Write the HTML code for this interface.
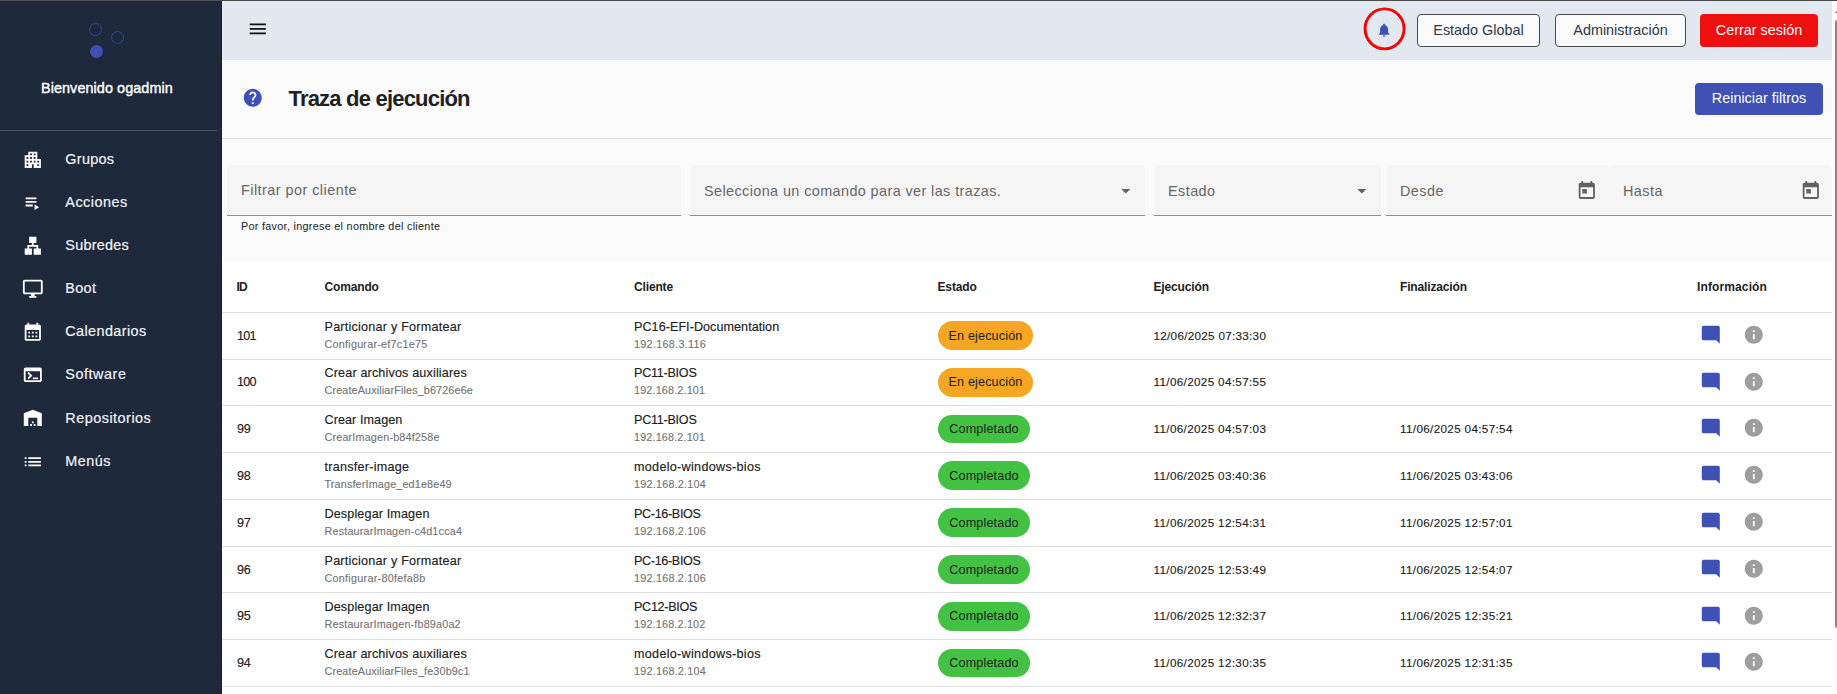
<!DOCTYPE html>
<html lang="es">
<head>
<meta charset="utf-8">
<title>Traza de ejecución</title>
<style>
*{box-sizing:border-box;margin:0;padding:0}
html,body{width:1837px;height:694px;overflow:hidden;background:#fafafa;font-family:"Liberation Sans",sans-serif;color:#212121}
body{position:relative}
.abs{position:absolute}
/* top window strip */
#strip{left:0;top:0;width:1837px;height:1px;background:linear-gradient(to right,#57544f 0,#57544f 222px,#4b4846 222px,#4b4846 100%);z-index:50}
/* sidebar */
#side{left:0;top:0;width:222px;height:694px;background:#1e293b;border-right:1px solid #172033}
#side .dot{position:absolute;border-radius:50%;width:13px;height:13px}
#welcome{left:41px;top:79px;color:#fff;font-size:14.4px;line-height:18px;white-space:nowrap;letter-spacing:.08px;-webkit-text-stroke:.4px #fff}
#sdiv{left:0;top:130px;width:217px;height:1px;background:#4b5565}
.nav{position:absolute;left:0;width:222px;height:43px}
.nav svg{position:absolute;left:22px;top:11px;width:21.6px;height:21.6px;fill:#fff}
.nav span{position:absolute;left:65.3px;top:12px;font-size:14.4px;line-height:19px;color:#f1f3f6;white-space:nowrap;-webkit-text-stroke:.2px #f1f3f6}
/* header */
#head{left:222px;top:0;width:1610px;height:60px;background:#e2e8f0}
.btn{position:absolute;top:14px;height:33px;border-radius:4px;font-size:14.4px;line-height:31px;text-align:center;white-space:nowrap}
.btn.o{border:1px solid #4a4a4a;background:#fafafa;color:#2d3748}
/* title */
#title{left:288.5px;top:85.4px;font-size:22px;line-height:28px;font-weight:bold;color:#212121;white-space:nowrap;letter-spacing:-.8px}
#hr{left:222px;top:138px;width:1610px;height:1px;background:#dcdcdc}
/* filters */
.fld{position:absolute;top:165px;height:51px;background:#f5f5f5;border-radius:4px 4px 0 0;border-bottom:1px solid #8c8c8c}
.fld span{position:absolute;left:14px;top:17px;font-size:14.4px;line-height:19px;color:#666;white-space:nowrap}
.fld svg{position:absolute;fill:#616161}
#hint{left:241px;top:219px;font-size:10.8px;line-height:14px;color:#222;white-space:nowrap;letter-spacing:.3px}
/* table */
#tbl{left:222px;top:262px;width:1610px;height:432px;background:#fff}
.th{position:absolute;top:279px;font-size:12px;line-height:16px;font-weight:bold;color:#212121;white-space:nowrap;letter-spacing:-.15px}
.row{position:absolute;left:222px;width:1610px;height:47px}
.ln{position:absolute;left:222px;width:1610px;height:1px;background:#e0e0e0}
.row div,.row span{position:absolute;white-space:nowrap}
.id{left:15px;top:16px;font-size:12.6px;line-height:16px;letter-spacing:-.3px;-webkit-text-stroke:.15px #212121}
.p{font-size:12.6px;line-height:16px;top:7px;color:#212121;-webkit-text-stroke:.15px #212121}
.s{font-size:10.8px;line-height:14px;top:25px;color:#737373;-webkit-text-stroke:.12px #737373}
.c1{left:102.5px}.c2{left:412px}
.chip{left:716px;top:9px;height:28.8px;border-radius:15px;font-size:12.6px;line-height:30.6px;text-align:center;color:#212121;letter-spacing:.15px}
.run{width:95px;background:#f5a623}
.ok{width:92px;background:#42c143}
.chip.ct{background:none}
.d{font-size:11.7px;line-height:14px;top:17px;color:#212121;-webkit-text-stroke:.12px #212121}
.d1{left:931.5px}.d2{left:1178px}
.row svg{position:absolute;width:21.6px;height:21.6px;top:12.2px}
.cm{left:1477.6px;fill:#3f51b5}
.in{left:1520.5px;fill:#9e9e9e}
/* scrollbar */
#sb{left:1832px;top:1px;width:5px;height:693px;background:#fcfcfc}
#thumb{left:1835px;top:19.5px;width:4px;height:608px;background:#8b8b8b;border-radius:3px}
#arr{left:1835px;top:9.5px;width:0;height:0;border-left:3px solid transparent;border-right:3px solid transparent;border-bottom:3px solid #555}
</style>
</head>
<body>
<div id="side" class="abs">
  <div class="dot" style="left:89px;top:23px;border:1px solid #35459a"></div>
  <div class="dot" style="left:111px;top:31px;border:1px solid #35459a"></div>
  <div class="dot" style="left:90px;top:45px;background:#3f51b5"></div>
  <div id="welcome" class="abs">Bienvenido ogadmin</div>
  <div id="sdiv" class="abs"></div>
  <div class="nav" style="top:137.5px"><svg viewBox="0 0 24 24"><path d="M17 11V3H7v4H3v14h8v-4h2v4h8V11h-4zM7 19H5v-2h2v2zm0-4H5v-2h2v2zm0-4H5V9h2v2zm4 4H9v-2h2v2zm0-4H9V9h2v2zm0-4H9V5h2v2zm4 8h-2v-2h2v2zm0-4h-2V9h2v2zm0-4h-2V5h2v2zm4 12h-2v-2h2v2zm0-4h-2v-2h2v2z"/></svg><span style="letter-spacing:0.3px">Grupos</span></div>
  <div class="nav" style="top:180.7px"><svg viewBox="0 0 24 24"><path d="M4 10h12v2H4zm0-4h12v2H4zm0 8h8v2H4zm10 0v6l5-3z"/></svg><span style="letter-spacing:0.5px">Acciones</span></div>
  <div class="nav" style="top:223.9px"><svg viewBox="0 0 24 24"><path d="M13 22h8v-7h-3v-4h-5V9h3V2H8v7h3v2H6v4H3v7h8v-7H8v-2h8v2h-3z"/></svg><span style="letter-spacing:0.25px">Subredes</span></div>
  <div class="nav" style="top:267.1px"><svg viewBox="0 0 24 24"><path d="M21 2H3c-1.1 0-2 .9-2 2v12c0 1.1.9 2 2 2h7v2H8v2h8v-2h-2v-2h7c1.1 0 2-.9 2-2V4c0-1.1-.9-2-2-2zm0 14H3V4h18v12z"/></svg><span style="letter-spacing:0.35px">Boot</span></div>
  <div class="nav" style="top:310.3px"><svg viewBox="0 0 24 24"><path d="M19 4h-1V2h-2v2H8V2H6v2H5c-1.11 0-1.99.9-1.99 2L3 20c0 1.1.89 2 2 2h14c1.1 0 2-.9 2-2V6c0-1.1-.9-2-2-2zm0 16H5V10h14v10zM9 14H7v-2h2v2zm4 0h-2v-2h2v2zm4 0h-2v-2h2v2zm-8 4H7v-2h2v2zm4 0h-2v-2h2v2zm4 0h-2v-2h2v2z"/></svg><span style="letter-spacing:0.4px">Calendarios</span></div>
  <div class="nav" style="top:352.7px"><svg viewBox="0 0 24 24"><path d="M20 4H4c-1.11 0-2 .9-2 2v12c0 1.1.89 2 2 2h16c1.1 0 2-.9 2-2V6c0-1.1-.89-2-2-2zm0 14H4V8h16v10zm-2-1h-6v-2h6v2zM7.5 17l-1.41-1.41L8.67 13l-2.59-2.59L7.5 9l4 4-4 4z"/></svg><span style="letter-spacing:0.55px">Software</span></div>
  <div class="nav" style="top:396.7px"><svg style="top:10.5px" viewBox="0 0 24 24"><path d="M22 21V7L12 3 2 7v14h5v-9h10v9h5zm-11-2H9v2h2v-2zm2-3h-2v2h2v-2zm2 3h-2v2h2v-2z"/></svg><span style="letter-spacing:0.5px">Repositorios</span></div>
  <div class="nav" style="top:439.9px"><svg style="top:10.7px" viewBox="0 0 24 24"><path d="M3 13h2v-2H3v2zm0 4h2v-2H3v2zm0-8h2V7H3v2zm4 4h14v-2H7v2zm0 4h14v-2H7v2zM7 7v2h14V7H7z"/></svg><span style="letter-spacing:0.5px">Menús</span></div>
</div>

<div id="head" class="abs"></div>
<svg class="abs" style="left:247.2px;top:18.4px;width:21.6px;height:21.6px" viewBox="0 0 24 24"><path fill="#111" d="M3 18h18v-2H3v2zm0-5h18v-2H3v2zm0-7v2h18V6H3z"/></svg>
<svg class="abs" style="left:1360px;top:4px;width:50px;height:50px" viewBox="0 0 50 50"><ellipse cx="24.55" cy="24.85" rx="19.5" ry="20" fill="none" stroke="#f00" stroke-width="2.9"/></svg>
<svg class="abs" style="left:1376.3px;top:21.6px;width:16.2px;height:16.2px" viewBox="0 0 24 24"><path fill="#3f51b5" d="M12 22c1.1 0 2-.9 2-2h-4c0 1.1.89 2 2 2zm6-6v-5c0-3.07-1.64-5.64-4.5-6.32V4c0-.83-.67-1.5-1.5-1.5s-1.5.67-1.5 1.5v.68C7.63 5.36 6 7.92 6 11v5l-2 2v1h16v-1l-2-2z"/></svg>
<div class="btn o" id="b1" style="left:1417px;width:123px">Estado Global</div>
<div class="btn o" id="b2" style="left:1555px;width:131px">Administración</div>
<div class="btn" id="b3" style="left:1700px;width:118px;background:#ee0f0f;color:#fff;line-height:33px">Cerrar sesión</div>

<svg class="abs" style="left:241.8px;top:87.2px;width:21.6px;height:21.6px" viewBox="0 0 24 24"><path fill="#3f51b5" d="M12 2C6.48 2 2 6.48 2 12s4.48 10 10 10 10-4.48 10-10S17.52 2 12 2zm1 17h-2v-2h2v2zm2.07-7.75l-.9.92C13.45 12.9 13 13.5 13 15h-2v-.5c0-1.1.45-2.1 1.17-2.83l1.24-1.26c.37-.36.59-.86.59-1.41 0-1.1-.9-2-2-2s-2 .9-2 2H8c0-2.21 1.79-4 4-4s4 1.79 4 4c0 .88-.36 1.68-.93 2.25z"/></svg>
<div id="title" class="abs">Traza de ejecución</div>
<div class="btn" id="b4" style="left:1695px;top:83px;width:128px;height:32px;line-height:30.6px;background:#3f51b5;color:#fff">Reiniciar filtros</div>
<div id="hr" class="abs"></div>

<div class="fld" style="left:227px;width:454px"><span id="f1" style="top:16px;letter-spacing:.47px">Filtrar por cliente</span></div>
<div class="fld" style="left:690px;width:455px"><span id="f2" style="letter-spacing:.41px">Selecciona un comando para ver las trazas.</span><svg style="left:425.3px;top:15.3px;width:21.6px;height:21.6px" viewBox="0 0 24 24"><path d="M7 10l5 5 5-5z"/></svg></div>
<div class="fld" style="left:1154px;width:227px"><span id="f3" style="letter-spacing:.45px">Estado</span><svg style="left:197.2px;top:15.3px;width:21.6px;height:21.6px" viewBox="0 0 24 24"><path d="M7 10l5 5 5-5z"/></svg></div>
<div class="fld" style="left:1386px;width:223px"><span id="f4" style="letter-spacing:.45px">Desde</span><svg style="left:190px;top:15px;width:21.6px;height:21.6px" viewBox="0 0 24 24"><path d="M19 3h-1V1h-2v2H8V1H6v2H5c-1.11 0-1.99.9-1.99 2L3 19c0 1.1.89 2 2 2h14c1.1 0 2-.9 2-2V5c0-1.1-.9-2-2-2zm0 16H5V8h14v11zM7 10h5v5H7z"/></svg></div>
<div class="fld" style="left:1609px;width:223px"><span id="f5" style="letter-spacing:.45px">Hasta</span><svg style="left:191px;top:15px;width:21.6px;height:21.6px" viewBox="0 0 24 24"><path d="M19 3h-1V1h-2v2H8V1H6v2H5c-1.11 0-1.99.9-1.99 2L3 19c0 1.1.89 2 2 2h14c1.1 0 2-.9 2-2V5c0-1.1-.9-2-2-2zm0 16H5V8h14v11zM7 10h5v5H7z"/></svg></div>
<div id="hint" class="abs">Por favor, ingrese el nombre del cliente</div>

<div id="tbl" class="abs"></div>
<div class="th" style="left:236.5px;letter-spacing:-.8px">ID</div>
<div class="th" style="left:324.5px">Comando</div>
<div class="th" style="left:634px">Cliente</div>
<div class="th" style="left:937.5px">Estado</div>
<div class="th" style="left:1153.5px">Ejecución</div>
<div class="th" style="left:1400px">Finalización</div>
<div class="th" style="left:1697px;letter-spacing:.12px">Información</div>
<!--ROWS-->
<div class="row" style="top:312px"><div class="id" style="letter-spacing:-.75px">101</div><div class="p c1" style="letter-spacing:0.228px">Particionar y Formatear</div><div class="s c1" style="letter-spacing:0.237px">Configurar-ef7c1e75</div><div class="p c2" style="letter-spacing:0.047px">PC16-EFI-Documentation</div><div class="s c2" style="letter-spacing:0.296px">192.168.3.116</div><div class="chip run" style="top:9.0px"></div><div class="chip run ct">En ejecución</div><div class="d d1" style="letter-spacing:0.286px">12/06/2025 07:33:30</div><svg class="cm" style="top:12.2px" viewBox="0 0 24 24"><path d="M21.99 4c0-1.1-.89-2-1.99-2H4c-1.1 0-2 .9-2 2v12c0 1.1.9 2 2 2h14l4 4-.01-18z"/></svg><svg class="in" style="top:12.2px" viewBox="0 0 24 24"><path d="M12 2C6.48 2 2 6.48 2 12s4.48 10 10 10 10-4.48 10-10S17.52 2 12 2zm1 15h-2v-6h2v6zm0-8h-2V7h2v2z"/></svg></div>
<div class="row" style="top:358px"><div class="id" style="letter-spacing:-.75px">100</div><div class="p c1" style="letter-spacing:0.154px">Crear archivos auxiliares</div><div class="s c1" style="letter-spacing:0.135px">CreateAuxiliarFiles_b6726e6e</div><div class="p c2" style="letter-spacing:-0.257px">PC11-BIOS</div><div class="s c2" style="letter-spacing:0.163px">192.168.2.101</div><div class="chip run" style="top:9.8px"></div><div class="chip run ct">En ejecución</div><div class="d d1" style="letter-spacing:0.335px">11/06/2025 04:57:55</div><svg class="cm" style="top:13.2px" viewBox="0 0 24 24"><path d="M21.99 4c0-1.1-.89-2-1.99-2H4c-1.1 0-2 .9-2 2v12c0 1.1.9 2 2 2h14l4 4-.01-18z"/></svg><svg class="in" style="top:13.2px" viewBox="0 0 24 24"><path d="M12 2C6.48 2 2 6.48 2 12s4.48 10 10 10 10-4.48 10-10S17.52 2 12 2zm1 15h-2v-6h2v6zm0-8h-2V7h2v2z"/></svg></div>
<div class="row" style="top:405px"><div class="id">99</div><div class="p c1" style="letter-spacing:0.073px">Crear Imagen</div><div class="s c1" style="letter-spacing:0.172px">CrearImagen-b84f258e</div><div class="p c2" style="letter-spacing:-0.257px">PC11-BIOS</div><div class="s c2" style="letter-spacing:0.163px">192.168.2.101</div><div class="chip ok" style="top:9.6px"></div><div class="chip ok ct">Completado</div><div class="d d1" style="letter-spacing:0.335px">11/06/2025 04:57:03</div><div class="d d2" style="letter-spacing:0.335px">11/06/2025 04:57:54</div><svg class="cm" style="top:12.2px" viewBox="0 0 24 24"><path d="M21.99 4c0-1.1-.89-2-1.99-2H4c-1.1 0-2 .9-2 2v12c0 1.1.9 2 2 2h14l4 4-.01-18z"/></svg><svg class="in" style="top:12.2px" viewBox="0 0 24 24"><path d="M12 2C6.48 2 2 6.48 2 12s4.48 10 10 10 10-4.48 10-10S17.52 2 12 2zm1 15h-2v-6h2v6zm0-8h-2V7h2v2z"/></svg></div>
<div class="row" style="top:452px"><div class="id">98</div><div class="p c1" style="letter-spacing:0.261px">transfer-image</div><div class="s c1" style="letter-spacing:0.154px">TransferImage_ed1e8e49</div><div class="p c2" style="letter-spacing:0.300px">modelo-windows-bios</div><div class="s c2" style="letter-spacing:0.229px">192.168.2.104</div><div class="chip ok" style="top:9.4px"></div><div class="chip ok ct">Completado</div><div class="d d1" style="letter-spacing:0.335px">11/06/2025 03:40:36</div><div class="d d2" style="letter-spacing:0.335px">11/06/2025 03:43:06</div><svg class="cm" style="top:12.2px" viewBox="0 0 24 24"><path d="M21.99 4c0-1.1-.89-2-1.99-2H4c-1.1 0-2 .9-2 2v12c0 1.1.9 2 2 2h14l4 4-.01-18z"/></svg><svg class="in" style="top:12.2px" viewBox="0 0 24 24"><path d="M12 2C6.48 2 2 6.48 2 12s4.48 10 10 10 10-4.48 10-10S17.52 2 12 2zm1 15h-2v-6h2v6zm0-8h-2V7h2v2z"/></svg></div>
<div class="row" style="top:499px"><div class="id">97</div><div class="p c1" style="letter-spacing:0.132px">Desplegar Imagen</div><div class="s c1" style="letter-spacing:0.181px">RestaurarImagen-c4d1cca4</div><div class="p c2" style="letter-spacing:-0.344px">PC-16-BIOS</div><div class="s c2" style="letter-spacing:0.229px">192.168.2.106</div><div class="chip ok" style="top:9.2px"></div><div class="chip ok ct">Completado</div><div class="d d1" style="letter-spacing:0.335px">11/06/2025 12:54:31</div><div class="d d2" style="letter-spacing:0.335px">11/06/2025 12:57:01</div><svg class="cm" style="top:12.2px" viewBox="0 0 24 24"><path d="M21.99 4c0-1.1-.89-2-1.99-2H4c-1.1 0-2 .9-2 2v12c0 1.1.9 2 2 2h14l4 4-.01-18z"/></svg><svg class="in" style="top:12.2px" viewBox="0 0 24 24"><path d="M12 2C6.48 2 2 6.48 2 12s4.48 10 10 10 10-4.48 10-10S17.52 2 12 2zm1 15h-2v-6h2v6zm0-8h-2V7h2v2z"/></svg></div>
<div class="row" style="top:546px"><div class="id">96</div><div class="p c1" style="letter-spacing:0.228px">Particionar y Formatear</div><div class="s c1" style="letter-spacing:0.264px">Configurar-80fefa8b</div><div class="p c2" style="letter-spacing:-0.344px">PC-16-BIOS</div><div class="s c2" style="letter-spacing:0.229px">192.168.2.106</div><div class="chip ok" style="top:9.0px"></div><div class="chip ok ct">Completado</div><div class="d d1" style="letter-spacing:0.335px">11/06/2025 12:53:49</div><div class="d d2" style="letter-spacing:0.335px">11/06/2025 12:54:07</div><svg class="cm" style="top:12.2px" viewBox="0 0 24 24"><path d="M21.99 4c0-1.1-.89-2-1.99-2H4c-1.1 0-2 .9-2 2v12c0 1.1.9 2 2 2h14l4 4-.01-18z"/></svg><svg class="in" style="top:12.2px" viewBox="0 0 24 24"><path d="M12 2C6.48 2 2 6.48 2 12s4.48 10 10 10 10-4.48 10-10S17.52 2 12 2zm1 15h-2v-6h2v6zm0-8h-2V7h2v2z"/></svg></div>
<div class="row" style="top:592px"><div class="id">95</div><div class="p c1" style="letter-spacing:0.132px">Desplegar Imagen</div><div class="s c1" style="letter-spacing:0.176px">RestaurarImagen-fb89a0a2</div><div class="p c2" style="letter-spacing:-0.300px">PC12-BIOS</div><div class="s c2" style="letter-spacing:0.188px">192.168.2.102</div><div class="chip ok" style="top:9.8px"></div><div class="chip ok ct">Completado</div><div class="d d1" style="letter-spacing:0.335px">11/06/2025 12:32:37</div><div class="d d2" style="letter-spacing:0.335px">11/06/2025 12:35:21</div><svg class="cm" style="top:13.2px" viewBox="0 0 24 24"><path d="M21.99 4c0-1.1-.89-2-1.99-2H4c-1.1 0-2 .9-2 2v12c0 1.1.9 2 2 2h14l4 4-.01-18z"/></svg><svg class="in" style="top:13.2px" viewBox="0 0 24 24"><path d="M12 2C6.48 2 2 6.48 2 12s4.48 10 10 10 10-4.48 10-10S17.52 2 12 2zm1 15h-2v-6h2v6zm0-8h-2V7h2v2z"/></svg></div>
<div class="row" style="top:639px"><div class="id">94</div><div class="p c1" style="letter-spacing:0.154px">Crear archivos auxiliares</div><div class="s c1" style="letter-spacing:0.146px">CreateAuxiliarFiles_fe30b9c1</div><div class="p c2" style="letter-spacing:0.300px">modelo-windows-bios</div><div class="s c2" style="letter-spacing:0.229px">192.168.2.104</div><div class="chip ok" style="top:9.6px"></div><div class="chip ok ct">Completado</div><div class="d d1" style="letter-spacing:0.335px">11/06/2025 12:30:35</div><div class="d d2" style="letter-spacing:0.335px">11/06/2025 12:31:35</div><svg class="cm" style="top:12.2px" viewBox="0 0 24 24"><path d="M21.99 4c0-1.1-.89-2-1.99-2H4c-1.1 0-2 .9-2 2v12c0 1.1.9 2 2 2h14l4 4-.01-18z"/></svg><svg class="in" style="top:12.2px" viewBox="0 0 24 24"><path d="M12 2C6.48 2 2 6.48 2 12s4.48 10 10 10 10-4.48 10-10S17.52 2 12 2zm1 15h-2v-6h2v6zm0-8h-2V7h2v2z"/></svg></div>
<div class="ln" style="top:312px"></div>
<div class="ln" style="top:359px"></div>
<div class="ln" style="top:405px"></div>
<div class="ln" style="top:452px"></div>
<div class="ln" style="top:499px"></div>
<div class="ln" style="top:546px"></div>
<div class="ln" style="top:592px"></div>
<div class="ln" style="top:639px"></div>
<div class="ln" style="top:686px"></div>
<!--/ROWS-->
<div id="sb" class="abs"></div>
<div id="thumb" class="abs"></div>
<div id="arr" class="abs"></div>
<div id="strip" class="abs"></div>
</body>
</html>
